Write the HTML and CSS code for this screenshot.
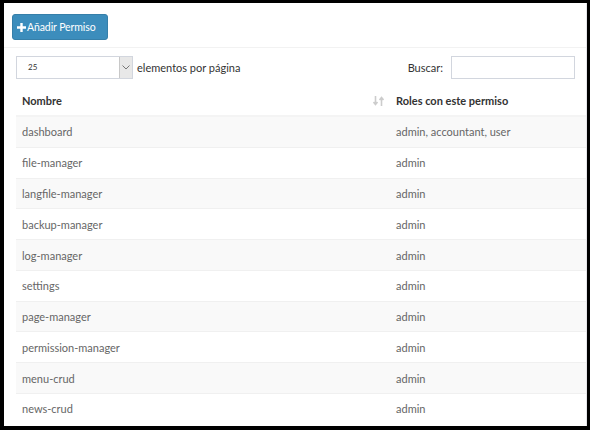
FILE: index.html
```html
<!DOCTYPE html>
<html lang="es">
<head>
    <meta charset="UTF-8">
    <title>Permisos</title>
    <link rel="stylesheet" href="styles.css">
</head>
<body>
    <div class="box">
        <div class="box-header">
            <button class="btn-add">
                <svg width="9" height="9" viewBox="0 0 9 9"><path d="M3.3 0h2.4v3.3H9v2.4H5.7V9H3.3V5.7H0V3.3h3.3z" fill="#fff"/></svg>
                Añadir Permiso
            </button>
        </div>
        <div class="box-body">
            <div class="controls">
                <div class="length">
                    <div class="len-select">
                        <span class="len-value">25</span>
                        <span class="len-arrow">
                            <svg width="8" height="5" viewBox="0 0 8 5"><path d="M0.5 0.5L4 4L7.5 0.5" fill="none" stroke="#777" stroke-width="1"/></svg>
                        </span>
                    </div>
                    <span class="label">elementos por página</span>
                </div>
                <div class="search">
                    <span class="label">Buscar:</span>
                    <div class="search-input"></div>
                </div>
            </div>

            <table class="grid">
                <thead>
                    <tr>
                        <th class="col-name">
                            Nombre
                            <svg class="sort" width="11" height="10" viewBox="0 0 11 10">
                                <path d="M2.5 0v8M0.5 6l2 2.5 2-2.5" fill="none" stroke="#ccc" stroke-width="1.6"/>
                                <path d="M8.5 10V2M6.5 4l2-2.5 2 2.5" fill="none" stroke="#ccc" stroke-width="1.6"/>
                            </svg>
                        </th>
                        <th>Roles con este permiso</th>
                    </tr>
                </thead>
                <tbody>
                    <tr><td>dashboard</td><td>admin, accountant, user</td></tr>
                    <tr><td>file-manager</td><td>admin</td></tr>
                    <tr><td>langfile-manager</td><td>admin</td></tr>
                    <tr><td>backup-manager</td><td>admin</td></tr>
                    <tr><td>log-manager</td><td>admin</td></tr>
                    <tr><td>settings</td><td>admin</td></tr>
                    <tr><td>page-manager</td><td>admin</td></tr>
                    <tr><td>permission-manager</td><td>admin</td></tr>
                    <tr><td>menu-crud</td><td>admin</td></tr>
                    <tr><td>news-crud</td><td>admin</td></tr>
                </tbody>
            </table>
        </div>
    </div>
</body>
</html>
```

FILE: styles.css
```css
* {
    box-sizing: border-box;
}
html, body {
    margin: 0;
    height: 430px;
    overflow: hidden;
}
body {
    background: #000;
    padding: 3px 3px 4px 4px;
    font-family: Lato, "Open Sans", sans-serif;
    color: #333;
}
.box {
    background: #fff;
    height: 423px;
    overflow: hidden;
    border-right: 1px solid #e6e6ea;
}
.box-header {
    padding: 11px 8px 7px;
    border-bottom: 1px solid #f2f2f2;
}
.btn-add {
    display: flex;
    align-items: center;
    gap: 1px;
    height: 26px;
    width: 96px;
    padding: 0 0 0 4px;
    background: #3c8dbc;
    border: 1px solid #367fa9;
    border-radius: 3px;
    color: #fff;
    font-family: inherit;
    font-size: 10.5px;
    letter-spacing: -0.1px;
}
.box-body {
    padding: 8px 0 0 12px;
}
.controls {
    display: flex;
    justify-content: space-between;
    align-items: center;
    padding-right: 11px;
    height: 23px;
}
.length, .search {
    display: flex;
    align-items: center;
}
.label {
    font-size: 11px;
    color: #333;
}
.len-select {
    display: flex;
    width: 117px;
    height: 23px;
    border: 1px solid #d2d6de;
    margin-right: 4px;
}
.len-value {
    flex: 1;
    font-size: 8px;
    line-height: 21px;
    padding-left: 11px;
}
.len-arrow {
    width: 13px;
    display: flex;
    align-items: center;
    justify-content: center;
    background: #e8e8e8;
    border-left: 1px solid #c8c8c8;
}
.search .label {
    margin-right: 8px;
}
.search-input {
    width: 124px;
    height: 23px;
    border: 1px solid #d2d6de;
}
.grid {
    width: calc(100% + 2px);
    border-collapse: collapse;
    margin-top: 7px;
    font-size: 11px;
}
.grid th {
    text-align: left;
    font-weight: 700;
    color: #333;
    padding: 7px 6px;
    line-height: 15px;
    border-bottom: 2px solid #f4f4f4;
}
.grid th.col-name {
    position: relative;
    width: 372px;
}
.sort {
    position: absolute;
    right: 4px;
    top: 10px;
}
.grid td {
    padding: 7.4px 6px;
    line-height: 15px;
    color: #666;
    border-top: 1px solid #f0f0f0;
}
.grid td + td, .grid th + th {
    padding-left: 8px;
}
.grid tbody tr:nth-child(odd) {
    background: #f9f9f9;
}
```
